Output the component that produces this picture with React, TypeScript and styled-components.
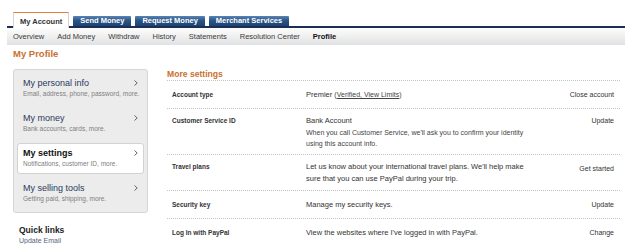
import React from 'react';
import styled, { createGlobalStyle } from 'styled-components';

const GlobalStyle = createGlobalStyle`
  * {
    box-sizing: border-box;
  }
  body {
    margin: 0;
    background: #fff;
    font-family: 'Liberation Sans', Arial, Helvetica, sans-serif;
    color: #333;
  }
`;

const tabs = ['Send Money', 'Request Money', 'Merchant Services'];
const subLinks = ['Overview', 'Add Money', 'Withdraw', 'History', 'Statements', 'Resolution Center'];

const navItems = [
  { title: 'My personal info', sub: 'Email, address, phone, password, more.' },
  { title: 'My money', sub: 'Bank accounts, cards, more.' },
  { title: 'My settings', sub: 'Notifications, customer ID, more.', active: true },
  { title: 'My selling tools', sub: 'Getting paid, shipping, more.' },
];

const Chevron = () => (
  <svg width="4" height="6" viewBox="0 0 4 6">
    <polyline points="0.5,0.5 3.2,3 0.5,5.5" fill="none" stroke="#555" strokeWidth="0.9" />
  </svg>
);

const App = () => {
  return (
    <>
      <GlobalStyle />
      <Styled.Header>
        <Styled.TabBar>
          <Styled.ActiveTab>My Account</Styled.ActiveTab>
          {tabs.map((t) => (
            <Styled.Tab key={t}>{t}</Styled.Tab>
          ))}
        </Styled.TabBar>
        <Styled.SubNav>
          {subLinks.map((l) => (
            <Styled.SubLink key={l}>{l}</Styled.SubLink>
          ))}
          <Styled.SubLink $current>Profile</Styled.SubLink>
        </Styled.SubNav>
      </Styled.Header>

      <Styled.Main>
        <Styled.PageTitle>My Profile</Styled.PageTitle>
        <Styled.Columns>
          <Styled.Sidebar>
            <Styled.NavBox>
              {navItems.map((item) => (
                <Styled.NavItem key={item.title} $active={item.active}>
                  <Styled.NavTitle $active={item.active}>
                    {item.title}
                    <Chevron />
                  </Styled.NavTitle>
                  <Styled.NavSub>{item.sub}</Styled.NavSub>
                </Styled.NavItem>
              ))}
            </Styled.NavBox>
            <Styled.QuickLinks>
              <h4>Quick links</h4>
              <a>Update Email</a>
            </Styled.QuickLinks>
          </Styled.Sidebar>

          <Styled.Settings>
            <Styled.SectionTitle>More settings</Styled.SectionTitle>

            <Styled.Row>
              <Styled.Label>Account type</Styled.Label>
              <Styled.Value>
                Premier{' '}
                <Styled.Hint $inline>
                  (<u>Verified, View Limits</u>)
                </Styled.Hint>
              </Styled.Value>
              <Styled.Action>Close account</Styled.Action>
            </Styled.Row>

            <Styled.Row>
              <Styled.Label>Customer Service ID</Styled.Label>
              <Styled.Value>
                Bank Account
                <Styled.Hint>
                  When you call Customer Service, we'll ask you to confirm your identity using this account info.
                </Styled.Hint>
              </Styled.Value>
              <Styled.Action>Update</Styled.Action>
            </Styled.Row>

            <Styled.Row>
              <Styled.Label>Travel plans</Styled.Label>
              <Styled.Value>
                Let us know about your international travel plans. We'll help make sure that you can use PayPal
                during your trip.
              </Styled.Value>
              <Styled.Action $drop={2}>Get started</Styled.Action>
            </Styled.Row>

            <Styled.Row>
              <Styled.Label>Security key</Styled.Label>
              <Styled.Value>Manage my security keys.</Styled.Value>
              <Styled.Action>Update</Styled.Action>
            </Styled.Row>

            <Styled.Row>
              <Styled.Label>Log In with PayPal</Styled.Label>
              <Styled.Value>View the websites where I've logged in with PayPal.</Styled.Value>
              <Styled.Action>Change</Styled.Action>
            </Styled.Row>
          </Styled.Settings>
        </Styled.Columns>
      </Styled.Main>
    </>
  );
};

const orange = '#c9702d';

const Styled = {
  Header: styled.div`
    margin: 12px 15px 0 7px;
  `,
  TabBar: styled.div`
    display: flex;
    align-items: flex-end;
    gap: 4px;
    height: 16px;
    padding-left: 6px;
    border-bottom: 2px solid #1b2e56;
  `,
  ActiveTab: styled.div`
    height: 16px;
    margin-bottom: -2px;
    padding: 3px 6px 0;
    background: #fff;
    border-top: 1px solid #e5803c;
    border-left: 1px solid #d4d4d4;
    border-right: 1px solid #d4d4d4;
    font-size: 7.5px;
    font-weight: bold;
    line-height: 11px;
    color: #333;
  `,
  Tab: styled.div`
    height: 10px;
    padding: 0 7px;
    background: linear-gradient(#5a84b3, #2a5687 45%, #1d4273);
    border-radius: 1px 1px 0 0;
    font-size: 7.5px;
    font-weight: bold;
    line-height: 10px;
    color: #fff;
  `,
  SubNav: styled.div`
    display: flex;
    align-items: center;
    gap: 13px;
    height: 17px;
    padding-left: 6px;
    background: linear-gradient(#fdfdfd, #e3e3e3);
    border-bottom: 1px solid #dce3ea;
  `,
  SubLink: styled.span<{ $current?: boolean }>`
    font-size: 7.5px;
    color: ${({ $current }) => ($current ? '#111' : '#3a3a3a')};
    font-weight: ${({ $current }) => ($current ? 'bold' : 'normal')};
  `,
  Main: styled.div`
    padding: 0 20px 0 13px;
  `,
  PageTitle: styled.h1`
    margin: 3px 0 0;
    font-size: 9.5px;
    line-height: 11px;
    color: ${orange};
  `,
  Columns: styled.div`
    display: flex;
    margin-top: 10px;
  `,
  Sidebar: styled.div`
    width: 135px;
    flex: none;
  `,
  NavBox: styled.div`
    display: flex;
    flex-direction: column;
    gap: 4px;
    padding: 3px;
    background: #ececec;
    border: 1px solid #d6d6d6;
    border-radius: 3px;
  `,
  NavItem: styled.div<{ $active?: boolean }>`
    padding: 3px 1px 4px 5px;
    border: 1px solid ${({ $active }) => ($active ? '#d2d2d2' : 'transparent')};
    border-radius: 3px;
    background: ${({ $active }) => ($active ? '#fff' : 'transparent')};
  `,
  NavTitle: styled.div<{ $active?: boolean }>`
    display: flex;
    align-items: center;
    justify-content: space-between;
    padding-right: 4px;
    font-size: 9px;
    line-height: 12px;
    font-weight: ${({ $active }) => ($active ? 'bold' : 'normal')};
    color: ${({ $active }) => ($active ? '#111' : '#2b3a5c')};
  `,
  NavSub: styled.div`
    font-size: 6.5px;
    line-height: 10px;
    white-space: nowrap;
    color: #808080;
  `,
  QuickLinks: styled.div`
    margin-top: 11px;
    padding-left: 6px;

    h4 {
      margin: 0;
      font-size: 8.5px;
      line-height: 12px;
      color: #222;
    }

    a {
      display: block;
      font-size: 7px;
      line-height: 10px;
      color: #55647f;
    }
  `,
  Settings: styled.div`
    flex: 1;
    margin-left: 19px;
  `,
  SectionTitle: styled.h2`
    margin: 0;
    padding-bottom: 1px;
    font-size: 8.6px;
    line-height: 10px;
    color: ${orange};
    border-bottom: 1px dotted #c4c4c4;
  `,
  Row: styled.div`
    display: grid;
    grid-template-columns: 134px 225px 1fr;
    align-items: start;
    align-content: center;
    min-height: 28px;
    padding: 5.5px 6px 5.5px 5px;
    border-bottom: 1px dotted #c4c4c4;
  `,
  Label: styled.div`
    font-size: 6.5px;
    font-weight: bold;
    line-height: 12px;
    color: #333;
  `,
  Value: styled.div`
    font-size: 7.5px;
    line-height: 12px;
    color: #333;
  `,
  Hint: styled.div<{ $inline?: boolean }>`
    display: ${({ $inline }) => ($inline ? 'inline' : 'block')};
    font-size: 7px;
    line-height: 11px;
    color: #444;
  `,
  Action: styled.div<{ $drop?: number }>`
    margin-top: ${({ $drop }) => $drop || 0}px;
    text-align: right;
    font-size: 7px;
    line-height: 12px;
    color: #333;
  `,
};

export default App;
